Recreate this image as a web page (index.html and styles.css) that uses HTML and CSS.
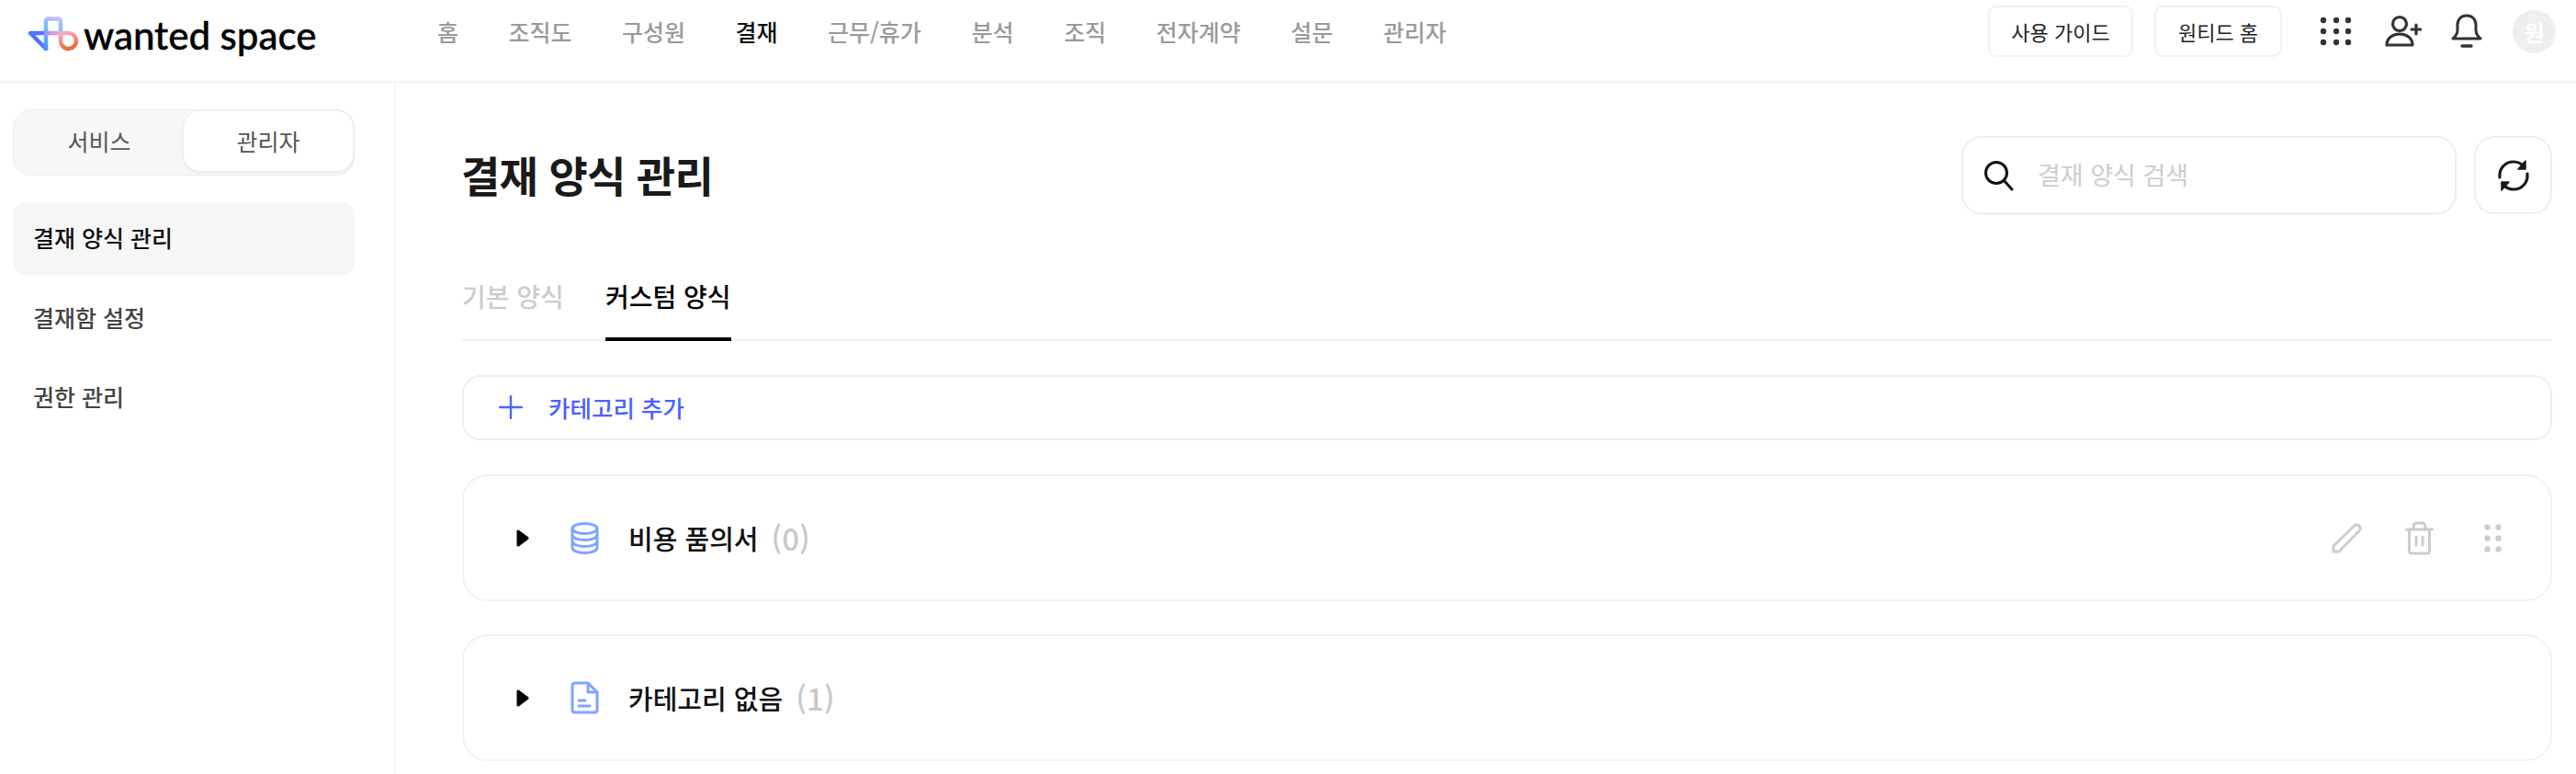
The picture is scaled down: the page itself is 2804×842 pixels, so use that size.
FILE: index.html
```html
<!DOCTYPE html>
<html lang="ko">
<head>
<meta charset="utf-8">
<title>결재 양식 관리</title>
<link rel="stylesheet" href="styles.css">
</head>
<body>
<header class="topbar">
  <div class="brand">
    <svg class="brand-mark" width="56" height="40" viewBox="0 0 56 40" fill="none" stroke-width="4.500" stroke-linecap="round" stroke-linejoin="round">
      <defs>
        <linearGradient id="gl" gradientUnits="userSpaceOnUse" x1="3" y1="18" x2="37" y2="18"><stop offset="0" stop-color="#4f6bff"/><stop offset="0.55" stop-color="#b58cf5"/><stop offset="1" stop-color="#f7a8c8"/></linearGradient>
        <linearGradient id="gt" gradientUnits="userSpaceOnUse" x1="20" y1="36" x2="36" y2="2"><stop offset="0" stop-color="#4f8dff"/><stop offset="0.6" stop-color="#6cc0ff"/><stop offset="1" stop-color="#cdbcff"/></linearGradient>
        <linearGradient id="gd" gradientUnits="userSpaceOnUse" x1="36" y1="8" x2="46" y2="36"><stop offset="0" stop-color="#d9b4f5"/><stop offset="0.4" stop-color="#f7a3bf"/><stop offset="1" stop-color="#f0682a"/></linearGradient>
      </defs>
      <path d="M20 35 L3 18 H20" stroke="#5372ff"/>
      <path d="M20 35 V5 Q20 2.500 22.500 2.500 H33.500 Q36 2.500 36 5 V18" stroke="url(#gt)"/>
      <path d="M20 18 H36" stroke="url(#gl)"/>
      <path d="M36 18 V27 A8.500 8.500 0 1 0 45 18 H36" stroke="url(#gd)"/>
    </svg>
    <span class="brand-name">wanted space</span>
  </div>
  <nav class="gnb">
    <a class="gnb-item">홈</a>
    <a class="gnb-item">조직도</a>
    <a class="gnb-item">구성원</a>
    <a class="gnb-item is-active">결재</a>
    <a class="gnb-item">근무/휴가</a>
    <a class="gnb-item">분석</a>
    <a class="gnb-item">조직</a>
    <a class="gnb-item">전자계약</a>
    <a class="gnb-item">설문</a>
    <a class="gnb-item">관리자</a>
  </nav>
  <div class="top-actions">
    <button class="top-btn guide">사용 가이드</button>
    <button class="top-btn home">원티드 홈</button>
    <svg class="ic-grid" width="36" height="36" viewBox="0 0 36 36" fill="#333">
      <circle cx="4" cy="6" r="3.200"/><circle cx="18" cy="6" r="3.200"/><circle cx="31" cy="6" r="3.200"/>
      <circle cx="4" cy="18" r="3.200"/><circle cx="18" cy="18" r="3.200"/><circle cx="31" cy="18" r="3.200"/>
      <circle cx="4" cy="30" r="3.200"/><circle cx="18" cy="30" r="3.200"/><circle cx="31" cy="30" r="3.200"/>
    </svg>
    <svg class="ic-person" width="40" height="36" viewBox="0 0 40 36" fill="none" stroke="#333" stroke-width="3.200" stroke-linecap="round" stroke-linejoin="round">
      <circle cx="16" cy="10" r="7.500"/>
      <path d="M2 33 C2 25 9 21 16 21 C23 21 30 25 30 33 Z"/>
      <path d="M34 11 V21 M29 16 H39"/>
    </svg>
    <svg class="ic-bell" width="34" height="38" viewBox="0 0 34 38" fill="none" stroke="#333" stroke-width="3" stroke-linecap="round" stroke-linejoin="round">
      <path d="M2 27 C5 24 7 22 7 17 V12 C7 6 11 2 17 2 C23 2 27 6 27 12 V17 C27 22 29 24 32 27 Z"/>
      <path d="M12 35 H22" stroke-width="3.500"/>
    </svg>
    <span class="avatar">원</span>
  </div>
</header>
<div class="layout">
  <aside class="sidebar">
    <div class="switch">
      <span class="switch-opt">서비스</span>
      <span class="switch-opt is-on">관리자</span>
    </div>
    <ul class="side-menu">
      <li class="side-item is-current">결재 양식 관리</li>
      <li class="side-item">결재함 설정</li>
      <li class="side-item">권한 관리</li>
    </ul>
  </aside>
  <main class="content">
    <div class="page-head">
      <h1 class="page-title">결재 양식 관리</h1>
      <div class="search">
        <svg width="34" height="34" viewBox="0 0 34 34" fill="none" stroke="#111" stroke-width="3" stroke-linecap="round">
          <circle cx="14" cy="14" r="11.500"/><path d="M22.500 22.500 L31 32"/>
        </svg>
        <span class="search-ph">결재 양식 검색</span>
      </div>
      <button class="refresh">
        <svg width="36" height="36" viewBox="0 0 36 36" fill="none" stroke="#1a1a1a" stroke-width="3.200" stroke-linecap="round">
          <path d="M3 20 C2 10 9 3 18 3 C23 3 27 5 30 9"/>
          <path d="M33 16 C34 26 27 33 18 33 C13 33 9 31 6 27"/>
          <path d="M31 2 V11 H23 Z" fill="#1a1a1a" stroke-width="1.500" stroke-linejoin="round"/>
          <path d="M5 34 V25 H13 Z" fill="#1a1a1a" stroke-width="1.500" stroke-linejoin="round"/>
        </svg>
      </button>
    </div>
    <div class="tabs">
      <a class="tab">기본 양식</a>
      <a class="tab is-selected">커스텀 양식</a>
    </div>
    <button class="add-cat">
      <svg width="26" height="26" viewBox="0 0 26 26" stroke="#4a66ff" stroke-width="2.400" stroke-linecap="round"><path d="M13 1 V25 M1 13 H25"/></svg>
      <span>카테고리 추가</span>
    </button>
    <section class="cat-card">
      <svg class="caret" width="14" height="19" viewBox="0 0 14 19" fill="#000" stroke="#000" stroke-width="3" stroke-linejoin="round"><path d="M2 2 L12 9.500 L2 17 Z"/></svg>
      <svg class="cat-icon" width="31" height="35" viewBox="0 0 31 35" fill="none" stroke="#7fa3ff" stroke-width="3">
        <ellipse cx="15.500" cy="7" rx="13.500" ry="5.500"/>
        <path d="M2 7 V28 C2 31 8 33.500 15.500 33.500 C23 33.500 29 31 29 28 V7"/>
        <path d="M2 14 C2 17 8 19.500 15.500 19.500 C23 19.500 29 17 29 14"/>
        <path d="M2 21 C2 24 8 26.500 15.500 26.500 C23 26.500 29 24 29 21"/>
      </svg>
      <span class="cat-name">비용 품의서</span>
      <span class="cat-count">(0)</span>
      <div class="cat-actions">
        <svg class="act-edit" width="33" height="33" viewBox="0 0 33 33" fill="none" stroke="#ccc" stroke-width="3" stroke-linejoin="round"><path d="M2 25 L25 2.500 Q27 1 29 2.500 L30.500 4 Q32 6 30.500 8 L8 31 L2 31 Z"/></svg>
        <svg class="act-del" width="31" height="37" viewBox="0 0 31 37" fill="none" stroke="#ccc" stroke-width="3" stroke-linecap="round" stroke-linejoin="round"><path d="M1.500 9 H29.500"/><path d="M9 9 V6 Q9 2 13 2 H18 Q22 2 22 6 V9"/><path d="M4.500 9 V32 Q4.500 35 7.500 35 H23.500 Q26.500 35 26.500 32 V9"/><path d="M12 17 V26 M19 17 V26"/></svg>
        <svg class="act-drag" width="19" height="31" viewBox="0 0 19 31" fill="#ccc"><circle cx="3.500" cy="3.500" r="3.200"/><circle cx="15.500" cy="3.500" r="3.200"/><circle cx="3.500" cy="15.500" r="3.200"/><circle cx="15.500" cy="15.500" r="3.200"/><circle cx="3.500" cy="27.500" r="3.200"/><circle cx="15.500" cy="27.500" r="3.200"/></svg>
      </div>
    </section>
    <section class="cat-card">
      <svg class="caret" width="14" height="19" viewBox="0 0 14 19" fill="#000" stroke="#000" stroke-width="3" stroke-linejoin="round"><path d="M2 2 L12 9.500 L2 17 Z"/></svg>
      <svg class="cat-icon" width="31" height="36" viewBox="0 0 31 36" fill="none" stroke="#7fa3ff" stroke-width="3" stroke-linejoin="round" stroke-linecap="round">
        <path d="M19 2 H5 Q2 2 2 5 V31 Q2 34 5 34 H26 Q29 34 29 31 V12 Z"/>
        <path d="M19 2 V12 H29"/>
        <path d="M9 21 H16 M9 27 H21"/>
      </svg>
      <span class="cat-name">카테고리 없음</span>
      <span class="cat-count">(1)</span>
    </section>
  </main>
</div>
</body>
</html>
```
FILE: styles.css
```css
* { box-sizing: border-box; }
html, body { margin: 0; padding: 0; height: 100%; }
body {
  width: 100%;
  height: 842px;
  overflow: hidden;
  background: #fff;
  color: #111;
  font-family: "Noto Sans CJK KR", "Noto Sans", sans-serif;
  display: flex;
  flex-direction: column;
}
button { font-family: inherit; background: #fff; cursor: pointer; padding: 0; }
a { display: block; }

.topbar {
  display: flex;
  align-items: center;
  height: 90px;
  flex: none;
  padding-bottom: 20px;
  border-bottom: 2px solid #f4f4f4;
}
.brand {
  display: flex;
  align-items: center;
  width: 476px;
  padding: 8px 0 0 30px;
  flex: none;
}
.brand-mark { flex: none; }
.brand-name {
  margin-left: 5px;
  font-family: Lato, sans-serif;
  font-size: 42px;
  font-weight: 500;
  line-height: 1;
  color: #000;
  white-space: nowrap;
  -webkit-text-stroke: 0.4px #000;
}
.gnb { display: flex; gap: 54.500px; }
.gnb-item { font-size: 25px; font-weight: 500; color: #9a9a9a; line-height: 36px; white-space: nowrap; }
.gnb-item.is-active { color: #111; }

.top-actions { margin-left: auto; display: flex; align-items: center; padding-right: 22px; }
.top-btn {
  height: 56px;
  border: 2px solid #f2f2f2;
  border-radius: 9px;
  font-size: 22px;
  color: #222;
  white-space: nowrap;
}
.guide { width: 158px; }
.home { width: 139px; margin-left: 23px; }
.ic-grid { margin-left: 41px; }
.ic-person { margin-left: 35px; }
.ic-bell { margin-left: 32px; }
.avatar {
  width: 47px;
  height: 47px;
  margin-left: 33px;
  border-radius: 50%;
  background: #eee;
  color: #fff;
  font-size: 24px;
  font-weight: 700;
  display: flex;
  align-items: center;
  justify-content: center;
}

.layout { display: flex; flex: 1; min-height: 0; }
.sidebar {
  width: 431px;
  flex: none;
  border-right: 2px solid #f6f6f6;
  padding: 29px 43px 0 14px;
}
.switch {
  display: flex;
  height: 72px;
  padding: 1px 1px 4px;
  background: #f7f7f7;
  border: 1px solid #eee;
  border-radius: 20px;
}
.switch-opt {
  flex: 1;
  display: flex;
  align-items: center;
  justify-content: center;
  padding-bottom: 2px;
  font-size: 25px;
  color: #555;
}
.switch-opt.is-on {
  background: #fff;
  border-radius: 18px;
  box-shadow: 0 1px 5px rgba(0, 0, 0, 0.08);
}
.side-menu { list-style: none; margin: 29px 0 0; padding: 0; display: flex; flex-direction: column; gap: 7.500px; }
.side-item {
  height: 79px;
  display: flex;
  align-items: center;
  padding: 0 0 3px 22px;
  border-radius: 14px;
  font-size: 25px;
  font-weight: 500;
  color: #444;
}
.side-item.is-current { background: #f6f6f6; color: #111; }

.content { flex: 1; min-width: 0; padding: 58px 26px 0 72px; }
.page-head { display: flex; align-items: center; height: 85px; }
.page-title { margin: 0 0 4px -1px; font-size: 46px; font-weight: 700; letter-spacing: -0.7px; color: #1a1a1a; line-height: 1; }
.search {
  margin-left: auto;
  width: 539px;
  height: 85px;
  display: flex;
  align-items: center;
  padding: 0 0 0 22px;
  gap: 25px;
  border: 2px solid #eee;
  border-radius: 22px;
  box-shadow: 0 1px 3px rgba(0, 0, 0, 0.04);
}
.search-ph { font-size: 27px; color: #ccc; margin-bottom: 3px; }
.refresh {
  width: 85px;
  height: 85px;
  margin-left: 19px;
  border: 2px solid #eee;
  border-radius: 22px;
  display: flex;
  align-items: center;
  justify-content: center;
}

.tabs { display: flex; gap: 45px; height: 138px; align-items: flex-end; border-bottom: 2px solid #f3f3f3; }
.tab {
  height: 93px;
  padding-top: 22px;
  font-size: 28px;
  font-weight: 500;
  line-height: 44px;
  color: #ccc;
  white-space: nowrap;
  margin-bottom: -2px;
}
.tab.is-selected { color: #000; border-bottom: 4px solid #000; }

.add-cat {
  width: 100%;
  height: 71px;
  margin-top: 37px;
  display: flex;
  align-items: center;
  gap: 28px;
  padding: 0 0 2px 38px;
  border: 2px solid #eee;
  border-radius: 20px;
  font-size: 25.500px;
  font-weight: 500;
  color: #4a62ff;
}

.cat-card {
  height: 138px;
  margin-top: 37px;
  display: flex;
  align-items: center;
  padding: 0 53px 0 57px;
  border: 2px solid #f2f2f2;
  border-radius: 28px;
}
.cat-card + .cat-card { margin-top: 36px; }
.caret { flex: none; }
.cat-icon { margin-left: 45px; flex: none; }
.cat-name { margin-left: 32px; font-size: 29px; font-weight: 500; color: #111; white-space: nowrap; }
.cat-count { margin-left: 14px; font-size: 33px; font-weight: 500; color: #c8c8c8; line-height: 1; }
.cat-actions { margin-left: auto; display: flex; align-items: center; }
.act-del { margin-left: 47px; }
.act-drag { margin-left: 55px; }
```
